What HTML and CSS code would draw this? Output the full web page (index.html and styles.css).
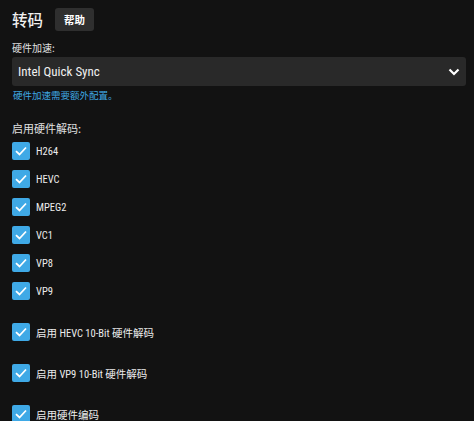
FILE: index.html
```html
<!DOCTYPE html>
<html lang="zh">
<head>
<meta charset="utf-8">
<link rel="stylesheet" href="styles.css">
</head>
<body>
<div class="page">
  <div class="header">
    <h2 class="title">转码</h2>
    <button class="help">帮助</button>
  </div>
  <label class="label">硬件加速:</label>
  <div class="select">
    <span>Intel Quick Sync</span>
    <svg class="chev" width="12" height="8" viewBox="0 0 12 8"><path d="M1.5 1.5 L6 6 L10.5 1.5" fill="none" stroke="#fff" stroke-width="2.2"/></svg>
  </div>
  <div class="hint">硬件加速需要额外配置。</div>
  <div class="section-label">启用硬件解码:</div>
  <div class="list">
    <div class="cb"><span class="box"><svg width="18" height="18" viewBox="0 0 18 18"><path d="M4 9.2 L7.5 12.5 L14 5.5" fill="none" stroke="#fff" stroke-width="1.8"/></svg></span>H264</div>
    <div class="cb"><span class="box"><svg width="18" height="18" viewBox="0 0 18 18"><path d="M4 9.2 L7.5 12.5 L14 5.5" fill="none" stroke="#fff" stroke-width="1.8"/></svg></span>HEVC</div>
    <div class="cb"><span class="box"><svg width="18" height="18" viewBox="0 0 18 18"><path d="M4 9.2 L7.5 12.5 L14 5.5" fill="none" stroke="#fff" stroke-width="1.8"/></svg></span>MPEG2</div>
    <div class="cb"><span class="box"><svg width="18" height="18" viewBox="0 0 18 18"><path d="M4 9.2 L7.5 12.5 L14 5.5" fill="none" stroke="#fff" stroke-width="1.8"/></svg></span>VC1</div>
    <div class="cb"><span class="box"><svg width="18" height="18" viewBox="0 0 18 18"><path d="M4 9.2 L7.5 12.5 L14 5.5" fill="none" stroke="#fff" stroke-width="1.8"/></svg></span>VP8</div>
    <div class="cb"><span class="box"><svg width="18" height="18" viewBox="0 0 18 18"><path d="M4 9.2 L7.5 12.5 L14 5.5" fill="none" stroke="#fff" stroke-width="1.8"/></svg></span>VP9</div>
  </div>
  <div class="list2">
    <div class="cb"><span class="box"><svg width="18" height="18" viewBox="0 0 18 18"><path d="M4 9.2 L7.5 12.5 L14 5.5" fill="none" stroke="#fff" stroke-width="1.8"/></svg></span>启用 HEVC 10-Bit 硬件解码</div>
    <div class="cb"><span class="box"><svg width="18" height="18" viewBox="0 0 18 18"><path d="M4 9.2 L7.5 12.5 L14 5.5" fill="none" stroke="#fff" stroke-width="1.8"/></svg></span>启用 VP9 10-Bit 硬件解码</div>
    <div class="cb"><span class="box"><svg width="18" height="18" viewBox="0 0 18 18"><path d="M4 9.2 L7.5 12.5 L14 5.5" fill="none" stroke="#fff" stroke-width="1.8"/></svg></span>启用硬件编码</div>
  </div>
</div>
</body>
</html>
```
FILE: styles.css
```css
html, body {
  margin: 0;
  padding: 0;
  background: #121212;
  color: #e8e8e8;
  font-family: "Roboto Condensed", "Noto Sans CJK SC", sans-serif;
  overflow: hidden;
}
.page {
  padding: 0 8px 0 12px;
  width: 454px;
}
.header {
  display: flex;
  align-items: center;
  height: 38px;
  gap: 12px;
}
.title {
  margin: 0;
  font-size: 15.5px;
  font-weight: 500;
  font-family: "Noto Sans CJK SC", sans-serif;
  color: #f0f0f0;
  line-height: 20px;
}
.help {
  background: #2f2f2f;
  color: #fff;
  border: none;
  border-radius: 3px;
  width: 39px;
  height: 23px;
  padding: 0;
  font-size: 10.5px;
  font-family: "Noto Sans CJK SC", sans-serif;
  font-weight: 700;
}
.label {
  display: block;
  font-size: 10px;
  font-family: "Noto Sans CJK SC", sans-serif;
  line-height: 14px;
  margin-top: 3px;
  color: #e0e0e0;
}
.select {
  margin-top: 2px;
  height: 29px;
  background: #292929;
  border-radius: 3px;
  display: flex;
  align-items: center;
  justify-content: space-between;
  padding: 0 6px 0 6px;
  font-size: 13px;
  color: #f0f0f0;
}
.chev { margin-top: 1px; }
.hint {
  color: #3fa7e2;
  font-size: 9.5px;
  font-family: "Noto Sans CJK SC", sans-serif;
  line-height: 14px;
  margin-top: 2px;
  padding-left: 1px;
}
.section-label {
  font-size: 11px;
  font-family: "Noto Sans CJK SC", sans-serif;
  line-height: 16px;
  margin-top: 18px;
  color: #e0e0e0;
}
.list {
  margin-top: 6px;
  display: flex;
  flex-direction: column;
  gap: 10px;
}
.list2 {
  margin-top: 23px;
  display: flex;
  flex-direction: column;
  gap: 23px;
}
.cb {
  display: flex;
  align-items: center;
  height: 18px;
  font-size: 10.5px;
  color: #ececec;
}
.box {
  width: 18px;
  height: 18px;
  background: #3fa9e6;
  border-radius: 2px;
  margin-right: 6px;
  display: flex;
  flex-shrink: 0;
}
```
